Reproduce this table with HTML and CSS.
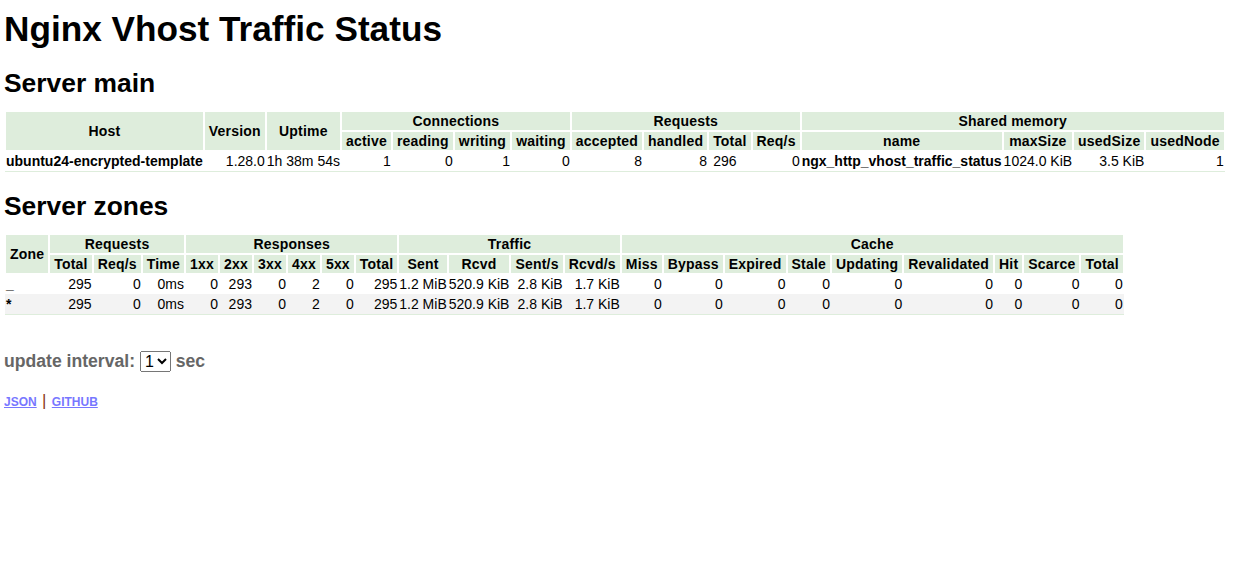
FILE: index.html
```html
<!DOCTYPE html>
<html>
<head>
<meta charset="utf-8">
<title>Nginx Vhost Traffic Status</title>
<link rel="stylesheet" href="styles.css">
</head>
<body>
<h1>Nginx Vhost Traffic Status</h1>

<h2>Server main</h2>
<table class="stat">
  <thead>
    <tr>
      <th rowspan="2">Host</th>
      <th rowspan="2">Version</th>
      <th rowspan="2">Uptime</th>
      <th colspan="4">Connections</th>
      <th colspan="4">Requests</th>
      <th colspan="4">Shared memory</th>
    </tr>
    <tr>
      <th>active</th><th>reading</th><th>writing</th><th>waiting</th>
      <th>accepted</th><th>handled</th><th>Total</th><th>Req/s</th>
      <th>name</th><th>maxSize</th><th>usedSize</th><th>usedNode</th>
    </tr>
  </thead>
  <tbody>
    <tr>
      <td class="name">ubuntu24-encrypted-template</td>
      <td>1.28.0</td>
      <td class="left">1h 38m 54s</td>
      <td>1</td><td>0</td><td>1</td><td>0</td>
      <td>8</td><td>8</td><td class="pad">296</td><td>0</td>
      <td class="name">ngx_http_vhost_traffic_status</td>
      <td>1024.0 KiB</td><td>3.5 KiB</td><td>1</td>
    </tr>
  </tbody>
</table>

<h2>Server zones</h2>
<table class="stat">
  <thead>
    <tr>
      <th rowspan="2">Zone</th>
      <th colspan="3">Requests</th>
      <th colspan="6">Responses</th>
      <th colspan="4">Traffic</th>
      <th colspan="9">Cache</th>
    </tr>
    <tr>
      <th>Total</th><th>Req/s</th><th>Time</th>
      <th>1xx</th><th>2xx</th><th>3xx</th><th>4xx</th><th>5xx</th><th>Total</th>
      <th>Sent</th><th>Rcvd</th><th>Sent/s</th><th>Rcvd/s</th>
      <th>Miss</th><th>Bypass</th><th>Expired</th><th>Stale</th><th>Updating</th><th>Revalidated</th><th>Hit</th><th>Scarce</th><th>Total</th>
    </tr>
  </thead>
  <tbody>
    <tr>
      <td class="name">_</td>
      <td>295</td><td>0</td><td>0ms</td>
      <td>0</td><td>293</td><td>0</td><td>2</td><td>0</td><td>295</td>
      <td>1.2 MiB</td><td>520.9 KiB</td><td>2.8 KiB</td><td>1.7 KiB</td>
      <td>0</td><td>0</td><td>0</td><td>0</td><td>0</td><td>0</td><td>0</td><td>0</td><td>0</td>
    </tr>
    <tr>
      <td class="name">*</td>
      <td>295</td><td>0</td><td>0ms</td>
      <td>0</td><td>293</td><td>0</td><td>2</td><td>0</td><td>295</td>
      <td>1.2 MiB</td><td>520.9 KiB</td><td>2.8 KiB</td><td>1.7 KiB</td>
      <td>0</td><td>0</td><td>0</td><td>0</td><td>0</td><td>0</td><td>0</td><td>0</td><td>0</td>
    </tr>
  </tbody>
</table>

<div class="interval">
  update interval:
  <select class="interval-select">
    <option selected>1</option>
    <option>2</option>
    <option>3</option>
    <option>4</option>
    <option>5</option>
  </select>
  sec
</div>

<div class="links">
  <a href="#">JSON</a>
  <span class="sep">|</span>
  <a href="#">GITHUB</a>
</div>
</body>
</html>
```

FILE: styles.css
```css
body {
  margin: 0;
  padding: 0 4px;
  font-family: "Liberation Sans", Arial, Helvetica, sans-serif;
  font-size: 17.6px;
  color: #000;
  background: #fff;
}

h1 {
  font-size: 35.2px;
  font-weight: bold;
  margin: 9px 0 0;
}

h2 {
  font-size: 26.4px;
  font-weight: bold;
  margin: 19px 0 12px;
}

.stat {
  border-collapse: separate;
  border-spacing: 0;
  margin: 0 0 1px 1px;
  border-bottom: 1px solid #deeddc;
  font-size: 14px;
}

.stat th {
  background: #deeddc;
  border: 1px solid #fff;
  padding: 1px 4px;
  line-height: 16px;
  font-weight: bold;
  letter-spacing: 0.2px;
  text-align: center;
  white-space: nowrap;
}

.stat td {
  border: 1px solid transparent;
  padding: 1px 0;
  line-height: 16px;
  text-align: right;
  white-space: nowrap;
}

.stat tbody tr:nth-child(even) td {
  background: #f3f3f3;
}

.stat td.name {
  font-weight: bold;
  text-align: left;
}

.stat td.left {
  text-align: left;
}

.stat td.pad {
  text-align: left;
  padding-left: 4px;
}

.interval {
  margin-top: 36px;
  font-weight: bold;
  color: #666;
}

.interval-select {
  font-family: "Liberation Sans", Arial, sans-serif;
  font-size: 16px;
  color: #000;
  vertical-align: baseline;
}

.links {
  margin-top: 19px;
  font-size: 12px;
  font-weight: bold;
}

.links a {
  color: #7777ff;
  text-decoration: underline;
}

.sep {
  color: #8b3a1a;
  font-size: 17px;
  font-weight: normal;
  margin: 0 2px;
}
```
